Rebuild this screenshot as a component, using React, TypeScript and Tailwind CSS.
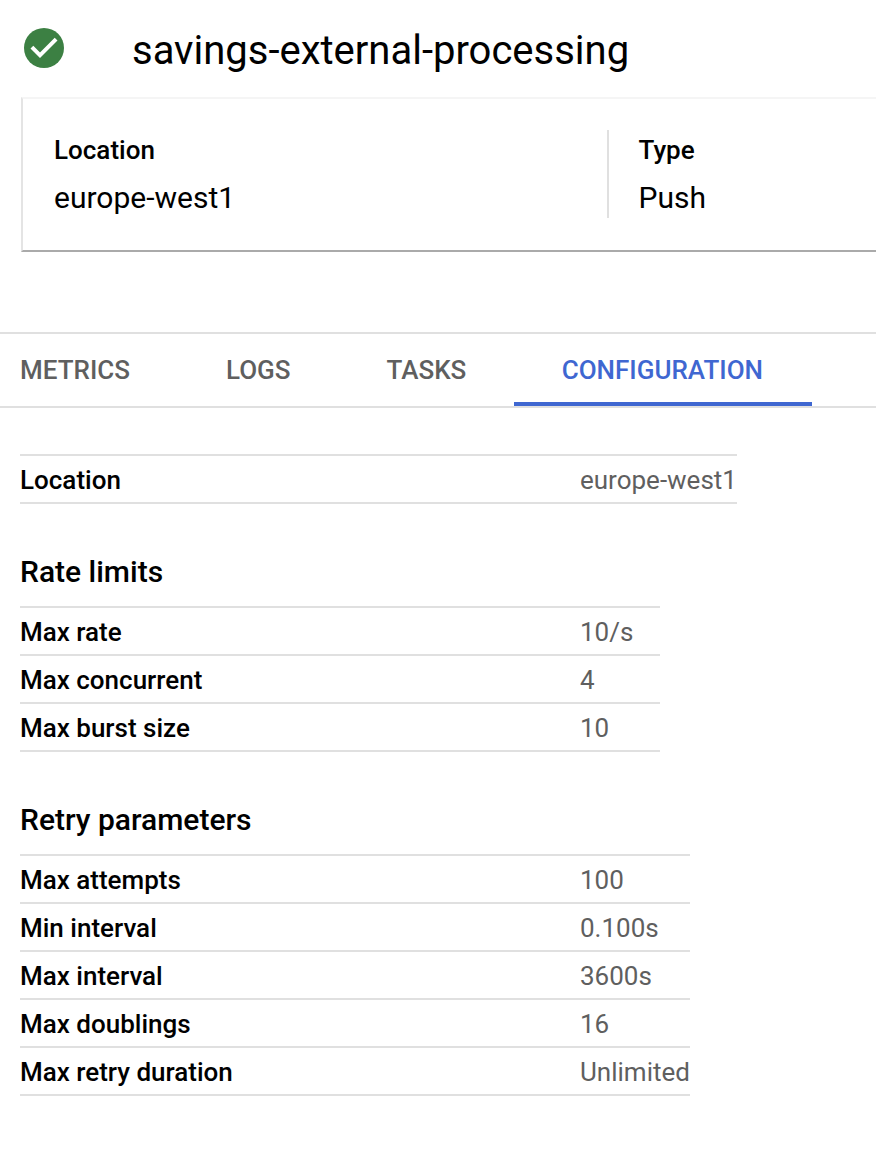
const tabs = [
  { label: 'METRICS', cls: 'pl-5 pr-12' },
  { label: 'LOGS', cls: 'px-12' },
  { label: 'TASKS', cls: 'px-12' },
];

const ConfigTable = ({ rows, width }: { rows: string[][]; width: string }) => (
  <div className={`${width} border-t-2 border-[#e0e0e0]`}>
    {rows.map(([label, value]) => (
      <div key={label} className="flex h-12 items-center border-b-2 border-[#e0e0e0] pt-[2px]">
        <div className="w-[560px] shrink-0 text-[26px] font-medium text-black">{label}</div>
        <div className="whitespace-nowrap text-[26px] text-[#5f5f5f]">{value}</div>
      </div>
    ))}
  </div>
);

export default function App() {
  return (
    <div className="h-[1162px] w-[876px] overflow-hidden bg-white font-['Roboto',sans-serif]">
      <div className="flex h-[97px] items-center pb-[2px] pl-[24px]">
        <svg width="40" height="40" viewBox="0 0 40 40">
          <circle cx="20" cy="20" r="20" fill="#3c8043" />
          <path d="M16 30 L6.5 20.5 L9.3 17.7 L16 24.4 L30.7 9.7 L33.5 12.5 Z" fill="#fff" />
        </svg>
        <h1 className="mt-[6px] ml-[68px] whitespace-nowrap text-[40px] font-normal text-black">savings-external-processing</h1>
      </div>

      <div className="ml-[21px] flex h-[155px] items-start border-t-2 border-l-2 border-b-2 border-t-[#f5f5f5] border-l-[#e4e4e4] border-b-[#aaaaaa] pt-[31px]">
        <div className="h-[88px] w-[586px] border-r-2 border-[#e0e0e0] pl-[31px]">
          <div className="text-[26px] leading-[40px] font-medium text-black">Location</div>
          <div className="text-[30px] leading-[56px] text-black">europe-west1</div>
        </div>
        <div className="pl-[29.5px]">
          <div className="text-[26px] leading-[40px] font-medium text-black">Type</div>
          <div className="text-[30px] leading-[56px] text-black">Push</div>
        </div>
      </div>

      <div className="mt-[80px] flex h-[76px] border-y-2 border-[#e0e0e0]">
        {tabs.map((tab) => (
          <div key={tab.label} className={`flex items-center text-[26px] font-medium text-[#5f5f5f] ${tab.cls}`}>
            {tab.label}
          </div>
        ))}
        <div className="flex h-[72px] w-[298px] items-center justify-center border-b-4 border-[#3f67d1] pt-[4px] pr-[2px] text-[26px] font-medium text-[#3f67d1]">
          CONFIGURATION
        </div>
      </div>

      <div className="pl-5 pt-[46px]">
        <ConfigTable width="w-[717px]" rows={[['Location', 'europe-west1']]} />

        <h2 className="mt-[44px] mb-[10px] text-[30px] leading-[48px] font-medium text-black">Rate limits</h2>
        <ConfigTable
          width="w-[640px]"
          rows={[
            ['Max rate', '10/s'],
            ['Max concurrent', '4'],
            ['Max burst size', '10'],
          ]}
        />

        <h2 className="mt-[44px] mb-[10px] text-[30px] leading-[48px] font-medium text-black">Retry parameters</h2>
        <ConfigTable
          width="w-[670px]"
          rows={[
            ['Max attempts', '100'],
            ['Min interval', '0.100s'],
            ['Max interval', '3600s'],
            ['Max doublings', '16'],
            ['Max retry duration', 'Unlimited'],
          ]}
        />
      </div>
    </div>
  );
}
